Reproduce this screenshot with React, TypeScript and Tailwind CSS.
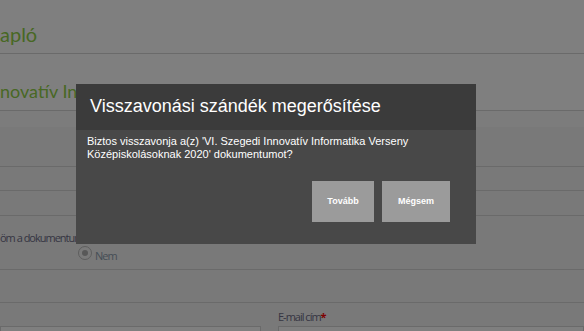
import { useState } from 'react';

const Row = ({ className = '', children }: { className?: string; children?: React.ReactNode }) => (
  <div className={`border-b border-[#d4d4d4] ${className}`}>{children}</div>
);

const App = () => {
  const [open] = useState(true);

  return (
    <div className="relative h-[331px] w-[584px] overflow-hidden bg-white font-['Open_Sans',sans-serif]">
      {/* page underneath */}
      <Row className="h-[54px] pt-[22px] font-['Lato',sans-serif]">
        <div className="text-[20px] leading-[24px] text-[#90d048]">apló</div>
      </Row>
      <Row className="h-[57px] pt-[25px] font-['Lato',sans-serif]">
        <div className="whitespace-nowrap text-[18px] leading-[24px] text-[#90d048]">novatív Informatika Verseny</div>
      </Row>
      <Row className="h-[56px] bg-[#f2f2f2]">
        <div className="h-[16px] bg-[#f8f8f8]" />
      </Row>
      <Row className="h-[24px] bg-[#f2f2f2]" />
      <Row className="h-[25px] bg-[#f2f2f2]" />
      <Row className="h-[54px] bg-[#f2f2f2]">
        <div className="whitespace-nowrap pt-[14px] text-[11px] leading-[16px] tracking-[-1px] text-[#6c6c86]">öm a dokumentumok tartalmát</div>
        <div className="-mt-[4px] flex items-center gap-[3px] pl-[78px]">
          <span className="flex h-[14px] w-[14px] items-center justify-center rounded-full border border-[#bbbbbb] bg-[#f4f4f4]">
            <span className="h-[6px] w-[6px] rounded-full bg-[#b0b0b0]" />
          </span>
          <span className="pt-[6px] text-[11px] tracking-[-1px] text-[#8c9cac]">Nem</span>
        </div>
      </Row>
      <Row className="h-[33px] bg-[#f2f2f2]" />
      <div className="grid h-[29px] grid-cols-[261px_1fr] gap-x-[17px] bg-[#f2f2f2]">
        <div className="flex flex-col justify-end">
          <div className="h-[6px] border border-b-0 border-[#d4d4d4] bg-white" />
        </div>
        <div className="flex flex-col">
          <div className="pt-[6px] text-[11px] leading-[16px] tracking-[-1px] text-[#6c6c86]">
            E-mail cím<span className="font-bold text-[#ff0000]">*</span>
          </div>
          <div className="mt-auto h-[6px] border border-b-0 border-[#d4d4d4] bg-white" />
        </div>
      </div>

      {open && (
        <div className="absolute inset-0 bg-black/50">
          <div className="absolute left-[76px] top-[84px] w-[400px] font-['Liberation_Sans',Arial,sans-serif]">
            <div className="h-[46px] bg-[#3b3b3b] pl-[14px] pt-[11px]">
              <h2 className="text-[18px] leading-[22px] text-white">Visszavonási szándék megerősítése</h2>
            </div>
            <div className="bg-[#484848] pb-[22px] pl-[11px] pr-[26px] pt-[5px]">
              <p className="text-[11px] leading-[13px] text-white">
                Biztos visszavonja a(z) 'VI. Szegedi Innovatív Informatika Verseny
                <br />
                Középiskolásoknak 2020' dokumentumot?
              </p>
              <div className="mt-[20px] flex justify-end gap-[8px]">
                <button className="h-[41px] w-[62px] bg-[#9b9b9b] text-[9px] font-bold text-white">Tovább</button>
                <button className="h-[41px] w-[68px] bg-[#9b9b9b] text-[9px] font-bold text-white">Mégsem</button>
              </div>
            </div>
          </div>
        </div>
      )}
    </div>
  );
};

export default App;
